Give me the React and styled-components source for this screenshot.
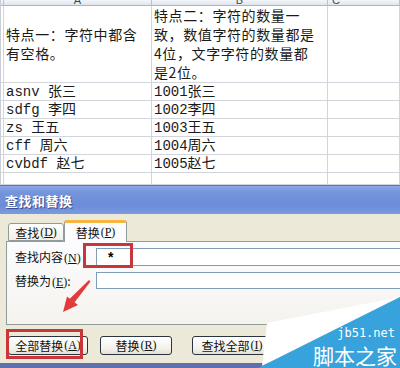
import React from "react";
import styled, { createGlobalStyle } from "styled-components";

const Global = createGlobalStyle`
  html, body { margin: 0; padding: 0; background: #fff; overflow: hidden; }
  #root { width: 400px; height: 368px; overflow: hidden; }
`;

const Page = styled.div`
  position: relative;
  width: 400px;
  height: 368px;
  overflow: hidden;
  display: flex;
  flex-direction: column;
  font-family: "Noto Sans CJK SC", "Liberation Sans", sans-serif;
`;

const Sheet = styled.div`
  display: grid;
  grid-template-columns: 3px 148px 176px 1fr;
  grid-template-rows: 6px 77px repeat(5, 18px) 12px;
  height: 185px;
  background: #fff;
  border-left: 1px solid #c9ced6;
  box-sizing: border-box;
`;

const Cell = styled.div`
  box-sizing: border-box;
  border-right: 1px solid #d2d6dc;
  border-bottom: 1px solid #d2d6dc;
  overflow: hidden;
  display: flex;
  align-items: center;
  padding-left: 2px;
  font-family: "Liberation Mono", "Noto Sans CJK SC", monospace;
  font-size: 14px;
  line-height: 18px;
  color: #1a1a1a;
  white-space: pre;
`;

const HeadCell = styled.div`
  box-sizing: border-box;
  border-right: 1px solid #b9c2cf;
  border-bottom: 1px solid #a9b4c4;
  background: linear-gradient(#f3f6fa, #dfe5ee);
  overflow: hidden;
  display: flex;
  align-items: flex-end;
  justify-content: ${(p) => p.$align || "center"};
  padding-left: ${(p) => p.$pad || 0}px;
  font-family: "Liberation Sans", sans-serif;
  font-size: 11px;
  line-height: 10px;
  color: #3c4a5c;
`;

const Lines = styled.div`
  display: flex;
  flex-direction: column;
  font-family: "Noto Sans CJK SC", sans-serif;
  font-size: 14px;
  letter-spacing: 0.6px;
  line-height: 19px;
  white-space: nowrap;
  span { display: block; height: 19px; overflow: hidden; }
`;

const Dialog = styled.div`
  display: flex;
  flex-direction: column;
  height: 183px;
`;

const TitleBar = styled.div`
  height: 29px;
  box-sizing: border-box;
  border-top: 1px solid #5a76b8;
  background: linear-gradient(#8aa6e6 0%, #7393dc 25%, #6c8cd8 70%, #7b9ae0 100%);
  display: flex;
  align-items: center;
  padding-left: 5px;
  color: #fff;
  font-weight: bold;
  font-size: 13px;
  letter-spacing: 0.5px;
  text-shadow: 1px 1px 0 #3a4f8a;
`;

const Body = styled.div`
  flex: 1;
  background: #ece9d8;
  padding: 6px 0 0 6px;
  display: flex;
  flex-direction: column;
`;

const Tabs = styled.div`
  display: flex;
  align-items: flex-end;
  height: 21px;
  padding-left: 2px;
  position: relative;
  z-index: 1;
`;

const Tab = styled.div`
  box-sizing: border-box;
  width: ${(p) => (p.$active ? 63 : 56)}px;
  height: ${(p) => (p.$active ? 22 : 18)}px;
  margin-bottom: ${(p) => (p.$active ? -1 : 0)}px;
  border: 1px solid #919b9c;
  border-bottom: ${(p) => (p.$active ? "none" : "1px solid #919b9c")};
  border-top: ${(p) => (p.$active ? "3px solid #f5b540" : "1px solid #919b9c")};
  border-radius: 3px 3px 0 0;
  background: ${(p) => (p.$active ? "#fcfcfe" : "linear-gradient(#ffffff, #f0efe6)")};
  display: flex;
  align-items: center;
  justify-content: center;
  font-size: 12px;
  color: #111;
`;

const Key = styled.span`
  font-family: "Liberation Serif", serif;
  font-size: 12px;
  margin-left: 1px;
  u { text-decoration: underline; }
`;

const Panel = styled.div`
  height: 84px;
  box-sizing: border-box;
  border: 1px solid #919b9c;
  border-right: none;
  background: linear-gradient(#fcfcfe, #f4f3ee);
  padding: 6px 0 0 8px;
  display: flex;
  flex-direction: column;
  gap: 6px;
`;

const Row = styled.div`
  display: flex;
  align-items: center;
  height: ${(p) => p.$h}px;
`;

const Label = styled.div`
  width: 81px;
  font-size: 12px;
  color: #111;
  white-space: nowrap;
`;

const Input = styled.div`
  flex: 1;
  height: 100%;
  box-sizing: border-box;
  border: 1px solid #7f9db9;
  border-right: none;
  background: #fff;
  display: flex;
  align-items: center;
  padding-left: 11px;
  font-family: "Liberation Sans", sans-serif;
  font-size: 14px;
  font-weight: bold;
`;

const Buttons = styled.div`
  display: flex;
  margin: 11px 0 0 2px;
  gap: 12px;
`;

const Button = styled.div`
  box-sizing: border-box;
  width: ${(p) => p.$w}px;
  height: 19px;
  margin-left: ${(p) => p.$ml || 0}px;
  border: 1px solid #2b3440;
  border-radius: 3px;
  background: linear-gradient(#ffffff, #f2f1ea 70%, #e3e0d2);
  display: flex;
  align-items: center;
  justify-content: center;
  font-size: 12px;
  color: #111;
  white-space: nowrap;
`;

const BottomBar = styled.div`
  height: 5px;
  background: #5f6fae;
`;

const RedBox = styled.div`
  position: absolute;
  box-sizing: border-box;
  border: 3px solid #c9363a;
  left: ${(p) => p.$x}px;
  top: ${(p) => p.$y}px;
  width: ${(p) => p.$w}px;
  height: ${(p) => p.$h}px;
`;

const Overlay = styled.svg`
  position: absolute;
  left: 0;
  top: 0;
  pointer-events: none;
`;

const Mark = styled.div`
  position: absolute;
  right: ${(p) => p.$r}px;
  top: ${(p) => p.$t}px;
  color: #fff;
  font-family: ${(p) => (p.$mono ? '"DejaVu Sans Mono", monospace' : '"Noto Sans CJK SC", sans-serif')};
  font-size: ${(p) => p.$s}px;
  line-height: ${(p) => p.$s}px;
  height: ${(p) => p.$s}px;
  white-space: nowrap;
`;

const rows = [
  ["asnv 张三", "1001张三"],
  ["sdfg 李四", "1002李四"],
  ["zs 王五", "1003王五"],
  ["cff 周六", "1004周六"],
  ["cvbdf 赵七", "1005赵七"],
];

export default function App() {
  return (
    <Page>
      <Global />
      <Sheet>
        <HeadCell />
        <HeadCell>A</HeadCell>
        <HeadCell>B</HeadCell>
        <HeadCell $align="flex-start" $pad={4}>C</HeadCell>

        <Cell />
        <Cell>
          <Lines>
            <span>特点一：字符中都含</span>
            <span>有空格。</span>
          </Lines>
        </Cell>
        <Cell>
          <Lines>
            <span>特点二：字符的数量一</span>
            <span>致，数值字符的数量都是</span>
            <span>4位，文字字符的数量都</span>
            <span>是2位。</span>
          </Lines>
        </Cell>
        <Cell />

        {rows.map(([a, b]) => (
          <React.Fragment key={a}>
            <Cell />
            <Cell>{a}</Cell>
            <Cell>{b}</Cell>
            <Cell />
          </React.Fragment>
        ))}
        <Cell />
        <Cell />
        <Cell />
        <Cell />
      </Sheet>

      <Dialog>
        <TitleBar>查找和替换</TitleBar>
        <Body>
          <Tabs>
            <Tab>查找<Key>(<u>D</u>)</Key></Tab>
            <Tab $active>替换<Key>(<u>P</u>)</Key></Tab>
          </Tabs>
          <Panel>
            <Row $h={18}>
              <Label>查找内容<Key>(<u>N</u>)</Key></Label>
              <Input>*</Input>
            </Row>
            <Row $h={17}>
              <Label>替换为<Key>(<u>E</u>)</Key>:</Label>
              <Input />
            </Row>
          </Panel>
          <Buttons>
            <Button $w={80}>全部替换<Key>(<u>A</u>)</Key></Button>
            <Button $w={72}>替换<Key>(<u>R</u>)</Key></Button>
            <Button $w={80} $ml={8}>查找全部<Key>(<u>I</u>)</Key></Button>
          </Buttons>
        </Body>
        <BottomBar />
      </Dialog>

      <RedBox $x={83} $y={243} $w={50} $h={25} />
      <RedBox $x={6} $y={329} $w={77} $h={30} />

      <Overlay width="400" height="368" viewBox="0 0 400 368">
        <polygon points="89,280 90.5,281.5 74.5,302.5 69.5,299" fill="#e23b3b" />
        <polygon points="63,312 67,296.5 78,305" fill="#e23b3b" />
        <polygon points="267,323 400,297 262,366" fill="#ffffff" />
        <polygon points="400,297 400,368 258,368" fill="#37a2db" />
      </Overlay>
      <Mark $mono $s={12} $r={5} $t={327}>jb51.net</Mark>
      <Mark $s={21} $r={3} $t={345}>脚本之家</Mark>
    </Page>
  );
}
